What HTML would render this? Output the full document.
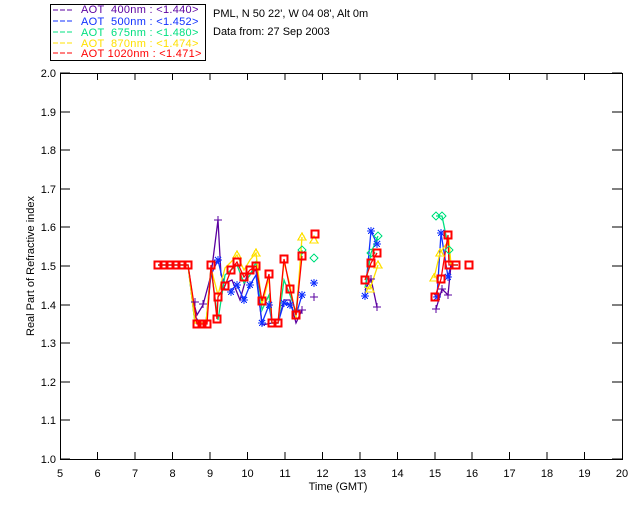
<!DOCTYPE html>
<html><head><meta charset="utf-8"><style>
html,body{margin:0;padding:0;background:#fff;width:640px;height:512px;overflow:hidden}
svg{display:block}
text{font-family:"Liberation Sans",sans-serif;font-size:11px}
</style></head><body>
<svg width="640" height="512" viewBox="0 0 640 512" xmlns="http://www.w3.org/2000/svg" shape-rendering="crispEdges">
<defs>
<g id="sq"><rect x="-3.5" y="-3.5" width="7" height="7" fill="none" stroke="#f00" stroke-width="1.6"/></g>
<g id="pl"><path d="M-4 0H4M0 -4V4" stroke="#5a00a0" stroke-width="1.3"/></g>
<g id="st"><path d="M-4 0H4M0 -4V4M-3 -3L3 3M-3 3L3 -3" stroke="#1030ff" stroke-width="1.3"/></g>
<g id="di"><path d="M0 -4L4 0L0 4L-4 0Z" fill="none" stroke="#00e080" stroke-width="1.1"/></g>
<g id="tr"><path d="M0 -4L4 3H-4Z" fill="none" stroke="#ffe000" stroke-width="1.3"/></g>
</defs>
<rect x="50.5" y="4.5" width="155" height="56" fill="#fff" stroke="#000"/>
<g font-size="11" letter-spacing="0.3">
<line x1="53" y1="10" x2="73" y2="10" stroke="#5a00a0" stroke-dasharray="5,2"/>
<text x="81" y="13" fill="#5a00a0" xml:space="preserve">AOT  400nm : &lt;1.440&gt;</text>
<line x1="53" y1="21" x2="73" y2="21" stroke="#1030ff" stroke-dasharray="5,2"/>
<text x="81" y="25" fill="#1030ff" xml:space="preserve">AOT  500nm : &lt;1.452&gt;</text>
<line x1="53" y1="32" x2="73" y2="32" stroke="#00e080" stroke-dasharray="5,2"/>
<text x="81" y="36" fill="#00e080" xml:space="preserve">AOT  675nm : &lt;1.480&gt;</text>
<line x1="53" y1="43" x2="73" y2="43" stroke="#ffe000" stroke-dasharray="5,2"/>
<text x="81" y="47" fill="#ffe000" xml:space="preserve">AOT  870nm : &lt;1.474&gt;</text>
<line x1="53" y1="53" x2="73" y2="53" stroke="#f00" stroke-dasharray="5,2"/>
<text x="81" y="57" fill="#f00" xml:space="preserve">AOT 1020nm : &lt;1.471&gt;</text>
</g>
<text x="213" y="17" fill="#000">PML, N 50 22', W 04 08', Alt 0m</text>
<text x="213" y="35" fill="#000">Data from: 27 Sep 2003</text>
<rect x="60.5" y="73.5" width="562" height="386" fill="none" stroke="#000"/>
<g stroke="#000">
<path d="M60 73h10M60 112h10M60 150h10M60 189h10M60 227h10M60 266h10M60 305h10M60 343h10M60 382h10M60 420h10M60 459h10"/>
<path d="M622 73h-10M622 112h-10M622 150h-10M622 189h-10M622 227h-10M622 266h-10M622 305h-10M622 343h-10M622 382h-10M622 420h-10M622 459h-10"/>
<path d="M97.5 459v-7M135 459v-7M172.5 459v-7M210 459v-7M247.5 459v-7M285 459v-7M322.5 459v-7M360 459v-7M397.5 459v-7M435 459v-7M472 459v-7M509.5 459v-7M547 459v-7M584.5 459v-7"/>
<path d="M97.5 73v7M135 73v7M172.5 73v7M210 73v7M247.5 73v7M285 73v7M322.5 73v7M360 73v7M397.5 73v7M435 73v7M472 73v7M509.5 73v7M547 73v7M584.5 73v7"/>
</g>
<g font-size="10" text-anchor="end" fill="#000">
<text x="56" y="77">2.0</text><text x="56" y="116">1.9</text><text x="56" y="154">1.8</text><text x="56" y="193">1.7</text><text x="56" y="231">1.6</text><text x="56" y="270">1.5</text><text x="56" y="309">1.4</text><text x="56" y="347">1.3</text><text x="56" y="386">1.2</text><text x="56" y="424">1.1</text><text x="56" y="463">1.0</text>
</g>
<g font-size="10" text-anchor="middle" fill="#000">
<text x="60" y="477">5</text><text x="97.5" y="477">6</text><text x="135" y="477">7</text><text x="172.5" y="477">8</text><text x="210" y="477">9</text><text x="247.5" y="477">10</text><text x="285" y="477">11</text><text x="322.5" y="477">12</text><text x="360" y="477">13</text><text x="397.5" y="477">14</text><text x="435" y="477">15</text><text x="472" y="477">16</text><text x="509.5" y="477">17</text><text x="547" y="477">18</text><text x="584.5" y="477">19</text><text x="622" y="477">20</text>
<text x="338" y="490">Time (GMT)</text>
</g>
<text transform="translate(34,266) rotate(-90)" text-anchor="middle" font-size="10">Real Part of Refractive index</text>
<g fill="none" stroke-width="1.3" shape-rendering="auto">
<polyline stroke="#5a00a0" points="158,265 188,265 193,300 197,315 203,305 211,275 218,220 221,275 225,283 232,280 240,300 247,275 256,270 262,325 272,323 278,323 284,300 290,300 296,323 302,310"/>
<polyline stroke="#1030ff" points="158,265 188,265 194,315 200,323 206,323 211,275 218,260 225,290 231,290 237,285 244,300 250,285 256,275 262,323 269,305 272,323 278,323 284,303 290,305 296,315 302,295"/>
<polyline stroke="#00e080" points="158,265 188,265 195,323 206,323 211,268 218,320 225,275 231,270 237,265 244,283 250,275 256,262 262,310 269,295 272,323 278,323 284,280 290,295 296,312 302,250"/>
<polyline stroke="#ffe000" points="158,265 188,265 195,323 206,323 211,268 218,295 225,268 231,262 237,255 244,270 250,260 256,253 262,305 269,278 272,323 278,323 284,262 290,285 296,318 302,237"/>
<polyline stroke="#f00" points="158,265 188,265 197,324 207,324 211,265 217,319 218,297 225,286 231,270 237,262 244,277 250,270 256,266 262,301 269,274 272,323 278,323 284,259 290,289 296,315 302,256"/>
<polyline stroke="#1030ff" points="365,296 371,231 377,244"/>
<polyline stroke="#5a00a0" points="365,290 371,279 377,307"/>
<polyline stroke="#00e080" points="365,288 371,253 378,236"/>
<polyline stroke="#ffe000" points="365,287 370,289 378,265"/>
<polyline stroke="#f00" points="365,280 371,263 377,253"/>
<polyline stroke="#1030ff" points="437,297 441,233 448,277 451,265 458,265"/>
<polyline stroke="#5a00a0" points="436,309 442,289 448,295 451,265"/>
<polyline stroke="#00e080" points="436,216 442,216 449,250 451,265 458,265"/>
<polyline stroke="#ffe000" points="434,278 440,253 449,240 451,265 458,265"/>
<polyline stroke="#f00" points="435,297 441,279 448,235 449,265 456,265 458,265"/>
</g>
<g>
<use href="#sq" x="158" y="265"/><use href="#sq" x="164" y="265"/><use href="#sq" x="170" y="265"/><use href="#sq" x="176" y="265"/><use href="#sq" x="182" y="265"/><use href="#sq" x="188" y="265"/>
<use href="#sq" x="197" y="324"/><use href="#sq" x="202" y="324"/><use href="#sq" x="207" y="324"/>
<use href="#pl" x="218" y="220"/><use href="#pl" x="195" y="302"/><use href="#pl" x="203" y="304"/><use href="#pl" x="314" y="297"/><use href="#pl" x="302" y="310"/>
<use href="#st" x="218" y="260"/><use href="#st" x="231" y="292"/><use href="#st" x="237" y="285"/><use href="#st" x="244" y="300"/><use href="#st" x="250" y="285"/><use href="#st" x="262" y="323"/><use href="#st" x="269" y="305"/><use href="#st" x="284" y="303"/><use href="#st" x="290" y="305"/><use href="#st" x="302" y="295"/><use href="#st" x="314" y="283"/>
<use href="#di" x="314" y="258"/><use href="#di" x="302" y="250"/><use href="#tr" x="314" y="240"/><use href="#tr" x="302" y="237"/><use href="#tr" x="237" y="255"/><use href="#tr" x="256" y="253"/>
<use href="#sq" x="211" y="265"/><use href="#sq" x="217" y="319"/><use href="#sq" x="218" y="297"/><use href="#sq" x="225" y="286"/><use href="#sq" x="231" y="270"/><use href="#sq" x="237" y="262"/><use href="#sq" x="244" y="277"/><use href="#sq" x="250" y="270"/><use href="#sq" x="256" y="266"/><use href="#sq" x="262" y="301"/><use href="#sq" x="269" y="274"/><use href="#sq" x="272" y="323"/><use href="#sq" x="278" y="323"/><use href="#sq" x="284" y="259"/><use href="#sq" x="290" y="289"/><use href="#sq" x="296" y="315"/><use href="#sq" x="302" y="256"/><use href="#sq" x="315" y="234"/>
<use href="#st" x="371" y="231"/><use href="#st" x="377" y="244"/><use href="#st" x="365" y="296"/>
<use href="#pl" x="371" y="279"/><use href="#pl" x="377" y="307"/>
<use href="#di" x="378" y="236"/><use href="#di" x="371" y="253"/>
<use href="#tr" x="378" y="265"/><use href="#tr" x="370" y="289"/>
<use href="#sq" x="377" y="253"/><use href="#sq" x="371" y="263"/><use href="#sq" x="365" y="280"/>
<use href="#di" x="436" y="216"/><use href="#di" x="442" y="216"/><use href="#di" x="449" y="250"/>
<use href="#st" x="441" y="233"/><use href="#st" x="448" y="277"/><use href="#st" x="437" y="297"/>
<use href="#pl" x="448" y="295"/><use href="#pl" x="436" y="309"/><use href="#pl" x="442" y="289"/>
<use href="#tr" x="434" y="278"/><use href="#tr" x="440" y="253"/>
<use href="#sq" x="448" y="235"/><use href="#sq" x="449" y="265"/><use href="#sq" x="456" y="265"/><use href="#sq" x="469" y="265"/><use href="#sq" x="441" y="279"/><use href="#sq" x="435" y="297"/>
</g>
</svg>
</body></html>
